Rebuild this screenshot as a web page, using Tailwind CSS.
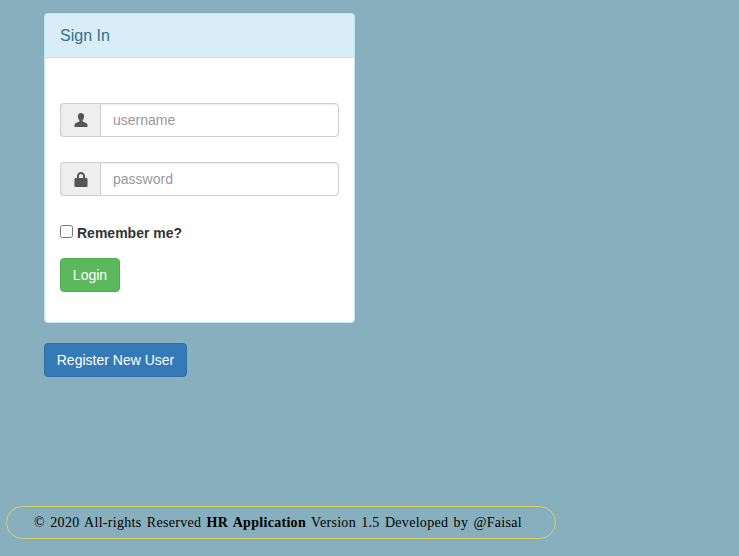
<!DOCTYPE html>
<html lang="en">
<head>
    <meta charset="UTF-8">
    <title>Sign In</title>
    <script src="https://cdn.jsdelivr.net/npm/@tailwindcss/browser@4"></script>
</head>
<body class="bg-[#87afbd] h-[556px] overflow-hidden font-['Liberation_Sans',sans-serif] text-sm text-[#333]">
    <div class="pl-[44px] pt-[13px]">
        <!-- Sign in panel -->
        <div class="w-[311px] h-[310px] bg-white border border-[#bce8f1] rounded">
            <div class="h-[44px] px-[15px] flex items-center bg-[#d9edf7] border-b border-[#bce8f1] rounded-t-[3px] text-base text-[#31708f]">Sign In</div>
            <form class="px-[15px] pt-[45px]">
                <div class="flex h-[34px] w-[279px]">
                    <span class="w-[40px] flex items-center justify-center bg-[#eee] border border-r-0 border-[#ccc] rounded-l">
                        <svg width="14" height="14" viewBox="0 0 14 14" fill="#555"><path d="M7 0C5 0 3.900 1.500 3.900 3.500C3.900 5 4.500 6.300 5.400 7.200V8.500C4 9.300 1 9.800 .5 11.500V14H13.500V11.500C13 9.800 10 9.300 8.600 8.500V7.200C9.500 6.300 10.100 5 10.100 3.500C10.100 1.500 9 0 7 0Z"/></svg>
                    </span>
                    <input type="text" placeholder="username" class="flex-1 min-w-0 px-3 border border-[#ccc] rounded-r outline-none placeholder:text-[#999] shadow-[inset_0_1px_1px_rgba(0,0,0,0.075)]">
                </div>
                <div class="flex h-[34px] w-[279px] mt-[25px]">
                    <span class="w-[40px] flex items-center justify-center bg-[#eee] border border-r-0 border-[#ccc] rounded-l">
                        <svg width="14" height="15" viewBox="0 0 14 15" fill="#555"><path d="M3 6V4.200C3 1.700 4.700 0 7 0S11 1.700 11 4.200V6H12.500C13 6 13.500 6.500 13.500 7V14C13.500 14.500 13 15 12.500 15H1.500C1 15 .5 14.500 .5 14V7C.5 6.500 1 6 1.500 6ZM5 6H9V4.200C9 2.900 8.200 2 7 2S5 2.900 5 4.200Z"/></svg>
                    </span>
                    <input type="password" placeholder="password" class="flex-1 min-w-0 px-3 border border-[#ccc] rounded-r outline-none placeholder:text-[#999] shadow-[inset_0_1px_1px_rgba(0,0,0,0.075)]">
                </div>
                <label class="flex items-center h-[20px] mt-[27px] font-bold">
                    <input type="checkbox" class="w-[13px] h-[13px] mr-[4px] -mt-[3px]">
                    Remember me?
                </label>
                <button type="button" class="block mt-[15px] w-[60px] h-[34px] bg-[#5cb85c] border border-[#4cae4c] rounded text-white">Login</button>
            </form>
        </div>
        <button type="button" class="block mt-[20px] w-[143px] h-[34px] bg-[#337ab7] border border-[#2e6da4] rounded text-white">Register New User</button>
    </div>
    <!-- Footer -->
    <div class="ml-[6px] mt-[129px] w-[550px] h-[33px] flex items-center justify-center border border-[#d9d36a] rounded-[17px] font-['Liberation_Serif',serif] text-sm text-black tracking-[0.3px] [word-spacing:1.5px]">
        <span class="-ml-[6px]">© 2020 All-rights Reserved <b>HR Application</b> Version 1.5 Developed by @Faisal</span>
    </div>
</body>
</html>
